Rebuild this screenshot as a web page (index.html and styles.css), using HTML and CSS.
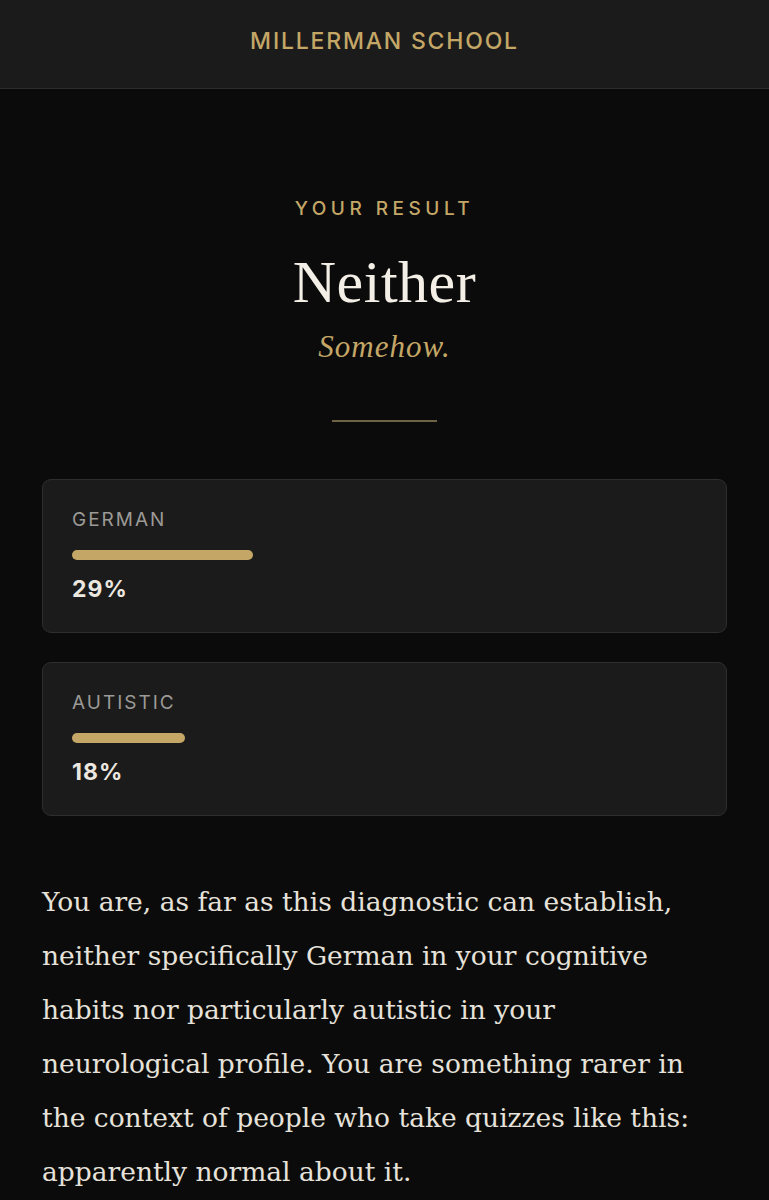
FILE: index.html
```html
<!DOCTYPE html>
<html lang="en">
<head>
<meta charset="utf-8">
<title>Your Result — Millerman School</title>
<link rel="stylesheet" href="styles.css">
</head>
<body>
<header class="site-header">
  <div class="brand">MILLERMAN SCHOOL</div>
</header>
<main class="result">
  <div class="eyebrow">YOUR RESULT</div>
  <h1 class="title">Neither</h1>
  <p class="subtitle">Somehow.</p>
  <hr class="divider">
  <section class="scores">
    <div class="score-card">
      <div class="score-label">GERMAN</div>
      <div class="bar"><div class="bar-fill" style="width: 29%"></div></div>
      <div class="score-value">29%</div>
    </div>
    <div class="score-card">
      <div class="score-label">AUTISTIC</div>
      <div class="bar"><div class="bar-fill" style="width: 18%"></div></div>
      <div class="score-value">18%</div>
    </div>
  </section>
  <p class="description">You are, as far as this diagnostic can establish, neither specifically German in your cognitive habits nor particularly autistic in your neurological profile. You are something rarer in the context of people who take quizzes like this: apparently normal about it.</p>
</main>
</body>
</html>
```
FILE: styles.css
```css
* { box-sizing: border-box; }

html, body {
  margin: 0;
  padding: 0;
  background: #0b0b0b;
}

body {
  font-family: Inter, "Liberation Sans", sans-serif;
  color: #e8e4dc;
}

.site-header {
  background: #1b1b1b;
  border-bottom: 1px solid #2c2c2c;
  padding: 27px 0 33px;
  text-align: center;
}

.brand {
  font-family: Inter, "Liberation Sans", sans-serif;
  font-size: 23px;
  line-height: 28px;
  font-weight: 500;
  letter-spacing: 1.8px;
  color: #c4a766;
}

.result {
  padding: 108px 42px 40px;
  display: flex;
  flex-direction: column;
  align-items: stretch;
}

.eyebrow {
  text-align: center;
  font-size: 19px;
  line-height: 24px;
  font-weight: 500;
  letter-spacing: 4.5px;
  color: #c4a766;
}

.title {
  margin: 25px 0 0;
  text-align: center;
  font-family: "Liberation Serif", serif;
  font-weight: 400;
  font-size: 60px;
  line-height: 72px;
  letter-spacing: 0.5px;
  color: #f3efe6;
}

.subtitle {
  margin: 9px 0 0;
  text-align: center;
  font-family: "Liberation Serif", serif;
  font-style: italic;
  font-size: 31px;
  line-height: 40px;
  letter-spacing: 1px;
  color: #c4a766;
}

.divider {
  align-self: center;
  width: 105px;
  height: 2px;
  margin: 53px 0 0;
  border: 0;
  background: #6f6346;
}

.scores {
  margin-top: 57px;
  display: flex;
  flex-direction: column;
  gap: 29px;
}

.score-card {
  background: #1b1b1b;
  border: 1px solid #2e2e2e;
  border-radius: 9px;
  padding: 28px 29px 29px;
}

.score-label {
  font-size: 19px;
  line-height: 24px;
  font-weight: 400;
  letter-spacing: 2px;
  color: #9c9a96;
}

.bar {
  margin-top: 18px;
  height: 10px;
  border-radius: 5px;
}

.bar-fill {
  height: 100%;
  border-radius: 5px;
  background: #c4a766;
}

.score-value {
  margin-top: 15px;
  font-size: 23px;
  line-height: 28px;
  font-weight: 700;
  letter-spacing: 1px;
  color: #ece8e0;
}

.description {
  margin: 59px 0 0;
  font-family: "DejaVu Serif", serif;
  font-size: 26.5px;
  line-height: 54px;
  color: #e6e2da;
}
```
